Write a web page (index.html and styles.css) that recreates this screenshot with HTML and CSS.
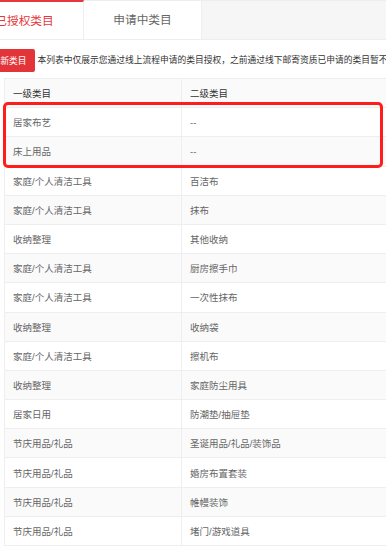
FILE: index.html
```html
<!DOCTYPE html>
<html lang="zh-CN">
<head>
  <meta charset="UTF-8">
  <title>类目授权</title>
  <link rel="stylesheet" href="styles.css">
</head>
<body>
  <div class="page">
    <div class="tabs">
      <div class="tab active">已授权类目</div>
      <div class="tab">申请中类目</div>
    </div>

    <div class="toolbar">
      <button class="btn-add">添加新类目</button>
      <span class="tip">本列表中仅展示您通过线上流程申请的类目授权，之前通过线下邮寄资质已申请的类目暂不展示</span>
    </div>

    <div class="table-wrap">
      <table class="cat-table">
        <thead>
          <tr><th class="col1">一级类目</th><th>二级类目</th></tr>
        </thead>
        <tbody>
          <tr><td>居家布艺</td><td>--</td></tr>
          <tr><td>床上用品</td><td>--</td></tr>
          <tr><td>家庭/个人清洁工具</td><td>百洁布</td></tr>
          <tr><td>家庭/个人清洁工具</td><td>抹布</td></tr>
          <tr><td>收纳整理</td><td>其他收纳</td></tr>
          <tr><td>家庭/个人清洁工具</td><td>厨房擦手巾</td></tr>
          <tr><td>家庭/个人清洁工具</td><td>一次性抹布</td></tr>
          <tr><td>收纳整理</td><td>收纳袋</td></tr>
          <tr><td>家庭/个人清洁工具</td><td>擦机布</td></tr>
          <tr><td>收纳整理</td><td>家庭防尘用具</td></tr>
          <tr><td>居家日用</td><td>防潮垫/抽屉垫</td></tr>
          <tr><td>节庆用品/礼品</td><td>圣诞用品/礼品/装饰品</td></tr>
          <tr><td>节庆用品/礼品</td><td>婚房布置套装</td></tr>
          <tr><td>节庆用品/礼品</td><td>帷幔装饰</td></tr>
          <tr><td>节庆用品/礼品</td><td>堵门/游戏道具</td></tr>
        </tbody>
      </table>
      <!-- 标注框 -->
      <div class="highlight"></div>
    </div>
  </div>
</body>
</html>
```

FILE: styles.css
```css
body {
  margin: 0;
  background-color: #ffffff;
  font-family: "Liberation Sans", "Noto Sans CJK SC", sans-serif;
  overflow: hidden;
}
.page {
  margin-left: -34px;
  width: 480px;
}
.tabs {
  display: flex;
  height: 40px;
  background-color: #f6f6f6;
  border-top: 1px solid #eeeeee;
  border-bottom: 1px solid #eeeeee;
  box-sizing: border-box;
}
.tab {
  width: 117px;
  background-color: #ffffff;
  border-right: 1px solid #eeeeee;
  font-size: 11.7px;
  color: #666666;
  text-align: center;
  line-height: 38px;
}
.tab.active {
  color: #e4393c;
  border-top: 2px solid #e4393c;
  margin-top: -1px;
  line-height: 37px;
}
.toolbar {
  display: flex;
  align-items: center;
  gap: 2px;
  height: 38px;
  padding-left: 8px;
  white-space: nowrap;
}
.btn-add {
  font-family: inherit;
  font-size: 8.7px;
  color: #ffffff;
  background-color: #e33539;
  border: none;
  border-radius: 2px;
  height: 23px;
  padding: 0 9px;
  margin-top: 2px;
}
.tip {
  font-size: 8.75px;
  color: #333333;
  margin-top: 1px;
}
.table-wrap {
  position: relative;
  margin-left: 38px;
}
.cat-table {
  border-collapse: collapse;
  width: 440px;
  font-size: 9.5px;
  color: #666666;
}
.cat-table th,
.cat-table td {
  border: 1px solid #eeeeee;
  height: 29.2px;
  padding: 0 8px;
  text-align: left;
  font-weight: normal;
  box-sizing: border-box;
}
.cat-table th {
  color: #333333;
  background-color: #fafafa;
}
.cat-table .col1 {
  width: 177px;
}
.cat-table tbody tr:nth-child(even) td {
  background-color: #fafafa;
}
.highlight {
  position: absolute;
  left: -1px;
  top: 24px;
  width: 380px;
  height: 66px;
  border: 3px solid #ff1c1c;
  border-radius: 5px;
  box-sizing: border-box;
}
```
